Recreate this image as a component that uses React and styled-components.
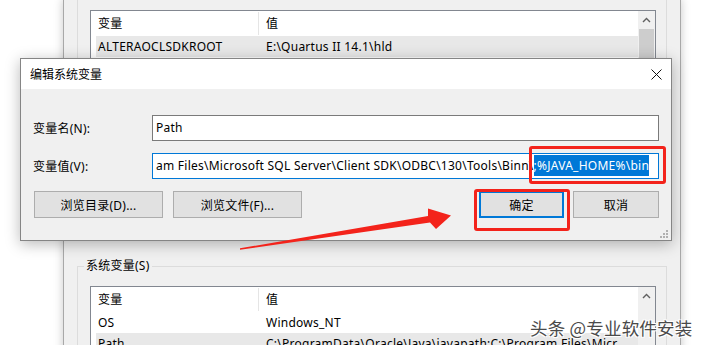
import React from 'react';
import styled, { createGlobalStyle } from 'styled-components';

const GlobalStyle = createGlobalStyle`
  * { box-sizing: border-box; }
  html, body { margin: 0; padding: 0; background: #fff; }
  body { width: 704px; height: 345px; overflow: hidden; }
`;

const Desktop = styled.div`
  position: relative;
  width: 704px;
  height: 345px;
  overflow: hidden;
  background: #fff;
  font-family: "Noto Sans", "Noto Sans CJK SC", sans-serif;
  font-size: 12px;
  letter-spacing: 0.25px;
  color: #000;
`;

/* the environment variables window behind the dialog */
const EnvWindow = styled.div`
  position: absolute;
  left: 63px;
  top: -1px;
  width: 618px;
  height: 380px;
  background: #f0f0f0;
  border-left: 1px solid #a8a8a8;
  border-right: 1px solid #a8a8a8;
  box-shadow: 0 0 9px rgba(0, 0, 0, 0.22);
  padding: 0 13px;
  display: flex;
  flex-direction: column;
`;

const UserGroup = styled.div`
  height: 247px;
  border: 1px solid #dcdcdc;
  border-top: none;
  padding: 11px 10px 0 12px;
`;

const SysGroup = styled.fieldset`
  margin: 17px 0 0 0;
  border: 1px solid #dcdcdc;
  padding: 0 10px 0 12px;
  min-width: 0;
  flex: 1;
`;

const Legend = styled.legend`
  margin-left: -6px;
  padding: 0 2px;
  line-height: 16px;
  font-size: 12px;
`;

const VarList = styled.div`
  display: flex;
  height: ${p => p.$h}px;
  margin-top: ${p => p.$top || 0}px;
  border: 1px solid #828790;
  background: #fff;
`;

const ListBody = styled.div`
  flex: 1;
  display: flex;
  flex-direction: column;
`;

const HeaderRow = styled.div`
  display: flex;
  height: 25px;
  align-items: center;
`;

const HeadCell = styled.div`
  width: ${p => p.$w}px;
  padding-left: 7px;
  height: 23px;
  line-height: 23px;
  border-right: ${p => (p.$divider ? '1px solid #e5e5e5' : 'none')};
`;

const Row = styled.div`
  display: flex;
  height: 21px;
  align-items: center;
  margin-left: 5px;
  background: ${p => (p.$sel ? '#e8e8e8' : 'transparent')};
  white-space: nowrap;
`;

const Cell = styled.div`
  width: ${p => (p.$w ? `${p.$w}px` : 'auto')};
  padding-left: ${p => p.$pad}px;
  flex-shrink: 0;
`;

const ScrollBar = styled.div`
  width: 17px;
  display: flex;
  flex-direction: column;
  background: #f0f0f0;
`;

const ArrowBtn = styled.div`
  height: 18px;
  display: flex;
  align-items: center;
  justify-content: center;
`;

const Thumb = styled.div`
  flex: 1;
  margin: 0 1px;
  background: #cdcdcd;
`;

/* edit dialog */
const Dialog = styled.div`
  position: absolute;
  left: 20px;
  top: 58px;
  width: 652px;
  height: 183px;
  background: #f0f0f0;
  border: 1px solid #858585;
  box-shadow: 0 3px 14px rgba(0, 0, 0, 0.28);
  display: flex;
  flex-direction: column;
`;

const TitleBar = styled.div`
  height: 30px;
  background: #fff;
  display: flex;
  align-items: center;
  justify-content: space-between;
  padding: 0 9px;
  letter-spacing: 0;
`;

const DialogBody = styled.div`
  position: relative;
  flex: 1;
  padding: 26px 12px 0 12px;
`;

const FieldRow = styled.div`
  display: grid;
  grid-template-columns: 119px 1fr;
  align-items: center;
  height: 26px;
  margin-bottom: 12px;
`;

const TextBox = styled.div`
  height: 26px;
  border: 1px solid ${p => (p.$focus ? '#0078d7' : '#7a7a7a')};
  background: #fff;
  padding: 0 3px;
  line-height: 24px;
  white-space: nowrap;
  overflow: hidden;
`;

const Selected = styled.span`
  background: #0078d7;
  color: #fff;
  padding: 2px 0;
`;

const ButtonRow = styled.div`
  display: flex;
  justify-content: space-between;
  margin-top: 5px;
  padding-left: 1px;
`;

const ButtonGroup = styled.div`
  display: flex;
  gap: ${p => p.$gap}px;
`;

const Button = styled.div`
  width: ${p => p.$w}px;
  height: 27px;
  display: flex;
  align-items: center;
  justify-content: center;
  background: #e1e1e1;
  border: ${p => (p.$primary ? '2px solid #0078d7' : '1px solid #adadad')};
`;

const Grip = styled.svg`
  position: absolute;
  right: 3px;
  bottom: 2px;
`;

/* annotations drawn over the screenshot */
const RedBox = styled.div`
  position: absolute;
  left: ${p => p.$x}px;
  top: ${p => p.$y}px;
  width: ${p => p.$w}px;
  height: ${p => p.$h}px;
  border: 3px solid #f3231b;
  border-radius: 3px;
`;

const ArrowLayer = styled.svg`
  position: absolute;
  left: 0;
  top: 0;
  pointer-events: none;
`;

const Watermark = styled.div`
  position: absolute;
  left: 530px;
  top: 315px;
  font-family: "Noto Sans CJK SC", sans-serif;
  font-size: 17.5px;
  letter-spacing: 0.2px;
  color: #4a4a4a;
  white-space: nowrap;
  text-shadow: 1px 1px 0 #fff, -1px -1px 0 #fff, 1px -1px 0 #fff, -1px 1px 0 #fff;
`;

const Chevron = () => (
  <svg width="9" height="6" viewBox="0 0 9 6">
    <polyline points="1,5 4.5,1.5 8,5" fill="none" stroke="#606060" strokeWidth="1.4" />
  </svg>
);

const CloseIcon = () => (
  <svg width="11" height="11" viewBox="0 0 11 11">
    <path d="M0.5 0.5 L10.5 10.5 M10.5 0.5 L0.5 10.5" stroke="#111" strokeWidth="1" />
  </svg>
);

function VariableList({ top, height, rows, thumb }) {
  return (
    <VarList $h={height} $top={top}>
      <ListBody>
        <HeaderRow>
          <HeadCell $w={168} $divider>变量</HeadCell>
          <HeadCell $w={300}>值</HeadCell>
        </HeaderRow>
        {rows.map((r, i) => (
          <Row key={i} $sel={r.sel}>
            <Cell $w={163} $pad={2}>{r.name}</Cell>
            <Cell $pad={7}>{r.value}</Cell>
          </Row>
        ))}
      </ListBody>
      <ScrollBar>
        <ArrowBtn><Chevron /></ArrowBtn>
        {thumb && <Thumb />}
      </ScrollBar>
    </VarList>
  );
}

export default function App() {
  return (
    <Desktop>
      <GlobalStyle />
      <EnvWindow>
        <UserGroup>
          <VariableList
            height={230}
            thumb
            rows={[{ name: 'ALTERAOCLSDKROOT', value: 'E:\\Quartus II 14.1\\hld', sel: true }]}
          />
        </UserGroup>
        <SysGroup>
          <Legend>系统变量(S)</Legend>
          <VariableList
            top={12}
            height={120}
            rows={[
              { name: 'OS', value: 'Windows_NT' },
              { name: 'Path', value: 'C:\\ProgramData\\Oracle\\Java\\javapath;C:\\Program Files\\Micr...', sel: true },
            ]}
          />
        </SysGroup>
      </EnvWindow>

      <Dialog>
        <TitleBar>
          <span>编辑系统变量</span>
          <CloseIcon />
        </TitleBar>
        <DialogBody>
          <FieldRow>
            <span>变量名(N):</span>
            <TextBox>Path</TextBox>
          </FieldRow>
          <FieldRow>
            <span>变量值(V):</span>
            <TextBox $focus>
              am Files\Microsoft SQL Server\Client SDK\ODBC\130\Tools\Binn\<Selected>;%JAVA_HOME%\bin</Selected>
            </TextBox>
          </FieldRow>
          <ButtonRow>
            <ButtonGroup $gap={10}>
              <Button $w={129}>浏览目录(D)...</Button>
              <Button $w={129}>浏览文件(F)...</Button>
            </ButtonGroup>
            <ButtonGroup $gap={9}>
              <Button $w={85} $primary>确定</Button>
              <Button $w={86}>取消</Button>
            </ButtonGroup>
          </ButtonRow>
          <Grip width="8" height="8" viewBox="0 0 8 8">
            <g fill="#b0b0b0">
              <rect x="6" y="0" width="2" height="2" />
              <rect x="3" y="3" width="2" height="2" />
              <rect x="6" y="3" width="2" height="2" />
              <rect x="0" y="6" width="2" height="2" />
              <rect x="3" y="6" width="2" height="2" />
              <rect x="6" y="6" width="2" height="2" />
            </g>
          </Grip>
        </DialogBody>
      </Dialog>

      <RedBox $x={529} $y={146} $w={137} $h={38} />
      <RedBox $x={474} $y={189} $w={96} $h={42} />
      <ArrowLayer width="704" height="345" viewBox="0 0 704 345">
        <polygon
          points="240,248.3 428,216 428,208.6 451,215.6 436,229 430,222.4 240,249.7"
          fill="#f3231b"
        />
      </ArrowLayer>
      <Watermark>头条 @专业软件安装</Watermark>
    </Desktop>
  );
}
